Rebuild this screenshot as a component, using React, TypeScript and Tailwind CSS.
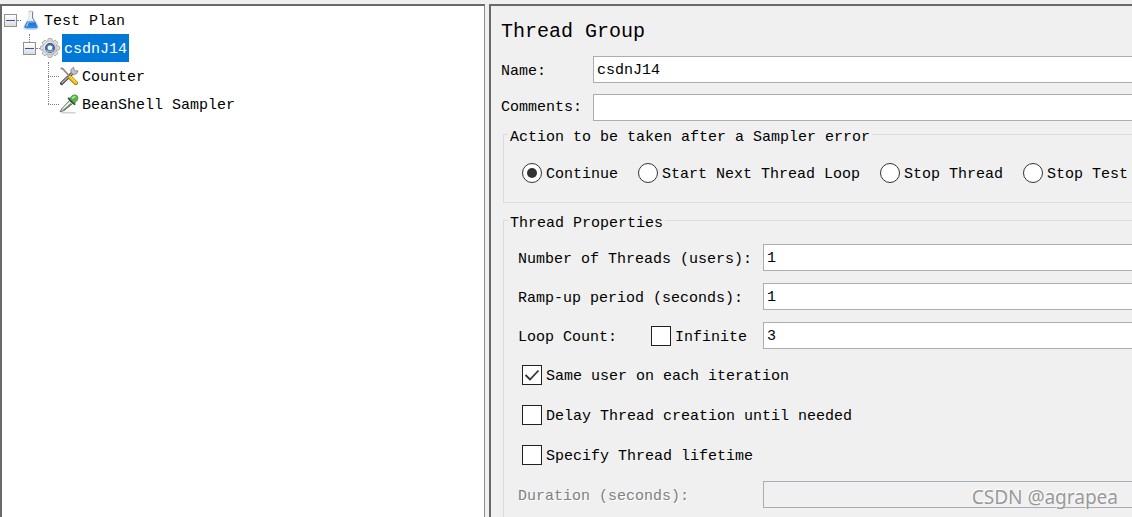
import { useId, useState, type ReactNode } from "react";

function FlaskIcon() {
  return (
    <svg width="16" height="20" viewBox="0 0 16 20" className="shrink-0" aria-hidden="true">
      <defs>
        <linearGradient id="liquid" x1="0" y1="0" x2="0" y2="1">
          <stop offset="0" stopColor="#1f6fce" />
          <stop offset="1" stopColor="#2f8ae6" />
        </linearGradient>
      </defs>
      <ellipse cx="8" cy="18.400" rx="7.600" ry="1.500" fill="#c3d6e6" />
      <path d="M6 1.500h4v6l5 8.800q.7 2.200-1.800 2.400H2.800Q.3 18.500 1 16.300L6 7.500z" fill="#eef3f8" stroke="#c6d0da" strokeWidth=".7" />
      <path d="M4 11.500h8.200l2.300 4.800q.5 1.900-1.600 2H3.100Q1 18.200 1.500 16.300z" fill="url(#liquid)" />
      <path d="M9.500 2v6l2.300 3.500" fill="none" stroke="#75879a" strokeWidth="1" />
      <path d="M5.500 12 3.500 16.500" fill="none" stroke="#a5d0f7" strokeWidth="1.200" />
      <ellipse cx="8.100" cy="11.700" rx="4" ry="1" fill="#73aee8" />
      <path d="M5.500 1.200h5" stroke="#bfc8d0" strokeWidth="1" />
    </svg>
  );
}

const TEETH = [0, 45, 90, 135, 180, 225, 270, 315];

function GearIcon() {
  return (
    <svg width="20" height="20" viewBox="0 0 20 20" className="shrink-0" aria-hidden="true">
      <defs>
        <linearGradient id="gearBody" x1="0" y1="0" x2="1" y2="1">
          <stop offset="0" stopColor="#f4f4f4" />
          <stop offset="1" stopColor="#bcbcbc" />
        </linearGradient>
      </defs>
      {TEETH.map((angle) => (
        <rect key={angle} x="7.800" y=".6" width="4.400" height="5" rx="1.200" fill="#e2e2e2" stroke="#959595" strokeWidth=".8" transform={`rotate(${angle} 10 10)`} />
      ))}
      <circle cx="10" cy="10" r="7" fill="url(#gearBody)" stroke="#b0b0b0" strokeWidth=".5" />
      <circle cx="10" cy="10" r="4.300" fill="#5c7db4" stroke="#34517f" strokeWidth="1.200" />
      <path d="M6.500 12a4 4 0 0 0 7-.2" fill="none" stroke="#8fb0de" strokeWidth="1.300" />
      <circle cx="10" cy="9.800" r="2.400" fill="#f3f7fc" />
    </svg>
  );
}

function ToolsIcon() {
  return (
    <svg width="20" height="20" viewBox="0 0 20 20" className="shrink-0" aria-hidden="true">
      <path d="M2.500 17.500 13.500 7" stroke="#4c4c4c" strokeWidth="3.200" strokeLinecap="round" />
      <path d="M3 16.800 14 6.500" stroke="#b4b4b4" strokeWidth="1.200" strokeLinecap="round" />
      <path d="M12.200 6.800 11.800 3.700 14.500 1.200 15 3.600 16.700 5 19 4.800 17.500 7.800 14.200 8.600z" fill="#c4c4c4" stroke="#777" strokeWidth=".8" />
      <path d="M1.500 2.300 3.500 2.500 10.500 10.200" fill="none" stroke="#7d7d7d" strokeWidth="1.700" />
      <path d="M2 2.500 10.500 11" stroke="#ddd" strokeWidth=".6" />
      <path d="M11 11.300 16.800 17" stroke="#9c7508" strokeWidth="4.300" strokeLinecap="round" />
      <path d="M11 11 16.800 16.700" stroke="#f2c21b" strokeWidth="3" strokeLinecap="round" />
      <path d="M11.500 10.800 16.500 15.700" stroke="#ffe680" strokeWidth=".8" strokeLinecap="round" />
    </svg>
  );
}

function DropperIcon() {
  return (
    <svg width="20" height="20" viewBox="0 0 20 20" className="shrink-0" aria-hidden="true">
      <path d="M3 18.800h13" stroke="#d2d2d2" strokeWidth="1.600" strokeLinecap="round" />
      <path d="M1 17.800 3 14.500 10.500 6.500 13.800 9.400 5.200 16.600z" fill="#c5cbc5" stroke="#6f756f" strokeWidth="1" />
      <path d="M4.500 14.700 11 8.200" stroke="#fff" strokeWidth="1.300" />
      <path d="M4.800 16 12 9.700" stroke="#5d8a50" strokeWidth="1.200" />
      <path d="M9.800 4.500 15.500 10" stroke="#34562f" strokeWidth="2.200" strokeLinecap="round" />
      <path d="M10.800 4.600 13.300 1.600q2.600-1.600 5 .3 1.500 2.300 0 4.300L15.600 9z" fill="#5eb24b" stroke="#4a9440" strokeWidth=".8" />
      <path d="M13.500 4 15.800 2.500" stroke="#b2e3a3" strokeWidth="1.500" strokeLinecap="round" />
    </svg>
  );
}

function Expander({ label }: { label: string }) {
  return (
    <button
      type="button"
      aria-label={label}
      className="flex h-[13px] w-[13px] shrink-0 items-center justify-center border border-[#919191] bg-linear-to-b from-white to-[#dcdcdc]"
    >
      <span className="h-px w-[9px] bg-[#3556a8]" />
    </button>
  );
}

function Tree() {
  return (
    <ul className="pl-1">
      <li>
        <div className="flex h-7 items-center">
          <Expander label="Collapse Test Plan" />
          <span className="mr-0.5 w-1 border-t border-dotted border-[#808080]" />
          <FlaskIcon />
          <span className="pl-[5px] pt-1">Test Plan</span>
        </div>
        <ul className="relative pl-[19px]">
          <li>
            <span className="absolute left-[25px] top-0 h-2 border-l border-dotted border-[#808080]" />
            <div className="flex h-7 items-center">
              <Expander label="Collapse csdnJ14" />
              <span className="w-1 border-t border-dotted border-[#808080]" />
              <GearIcon />
              <span className="ml-0.5 flex h-7 items-center bg-[#0078d7] px-0.5 pt-1 text-white">csdnJ14</span>
            </div>
            <ul className="relative pl-[25px]">
              <li className="flex h-7 items-center">
                <span className="absolute left-[25px] top-0 h-[42px] border-l border-dotted border-[#808080]" />
                <span className="w-[11px] border-t border-dotted border-[#808080]" />
                <ToolsIcon />
                <span className="pl-[3px] pt-1">Counter</span>
              </li>
              <li className="flex h-7 items-center">
                <span className="w-[11px] border-t border-dotted border-[#808080]" />
                <DropperIcon />
                <span className="pl-[3px] pt-1">BeanShell Sampler</span>
              </li>
            </ul>
          </li>
        </ul>
      </li>
    </ul>
  );
}

function Radio({ label, checked, onSelect }: { label: string; checked: boolean; onSelect: () => void }) {
  return (
    <label className="flex h-[22px] shrink-0 items-center gap-1 whitespace-nowrap">
      <input
        type="radio"
        name="onError"
        checked={checked}
        onChange={onSelect}
        className="grid h-5 w-5 appearance-none place-content-center rounded-full border border-[#333] bg-white before:h-[10px] before:w-[10px] before:rounded-full checked:before:bg-[#333]"
      />
      <span className="pt-1">{label}</span>
    </label>
  );
}

function Check({ label, initial = false }: { label: string; initial?: boolean }) {
  return (
    <label className="flex h-5 items-center gap-1 whitespace-nowrap">
      <span className="grid h-5 w-5">
        <input
          type="checkbox"
          defaultChecked={initial}
          className="peer col-start-1 row-start-1 h-5 w-5 appearance-none border border-[#222] bg-white"
        />
        <svg viewBox="0 0 20 20" aria-hidden="true" className="pointer-events-none invisible col-start-1 row-start-1 h-5 w-5 peer-checked:visible">
          <path d="M3.500 10 8 14.500 16.500 5.500" fill="none" stroke="#333" strokeWidth="1.800" />
        </svg>
      </span>
      <span className="pt-1">{label}</span>
    </label>
  );
}

const field = "h-[27px] min-w-0 flex-1 border border-r-0 border-[#abadb3] bg-white px-[3px] pt-0.5 outline-none";

function Property({ label, value, disabled = false, children }: { label: string; value: string; disabled?: boolean; children?: ReactNode }) {
  const id = useId();
  return (
    <div className="flex items-center">
      <div className="flex w-[245px] shrink-0 items-center justify-between pr-4">
        <label htmlFor={id} className={disabled ? "whitespace-nowrap pt-1 text-[#808080] [text-shadow:1px_1px_0_white]" : "whitespace-nowrap pt-1"}>
          {label}
        </label>
        {children}
      </div>
      <input id={id} type="text" defaultValue={value} disabled={disabled} className={disabled ? `${field} bg-[#f0f0f0]!` : field} />
    </div>
  );
}

function Group({ title, className, children }: { title: string; className: string; children: ReactNode }) {
  return (
    <fieldset className={`ml-3 min-w-0 border border-r-0 border-[#dcdcdc] ${className}`}>
      <legend className="ml-1 px-0.5 pt-2 leading-[18px]">{title}</legend>
      {children}
    </fieldset>
  );
}

const ACTIONS = ["Continue", "Start Next Thread Loop", "Stop Thread", "Stop Test"];

export default function App() {
  const [action, setAction] = useState("Continue");
  return (
    <div className="relative flex h-screen gap-1 overflow-hidden bg-[#f0f0f0] pt-1 font-['Liberation_Mono',monospace] text-[15px] leading-[18px] text-black">
      <nav aria-label="Test plan" className="w-[43%] max-w-[485px] shrink-0 border-l-2 border-t-2 border-r border-[#696969] border-r-[#8c8c90] bg-white">
        <div className="-ml-0.5">
          <Tree />
        </div>
      </nav>
      <main className="min-w-0 flex-1 overflow-hidden border-l-2 border-t-2 border-[#696969]">
        <h1 className="ml-2.5 flex h-[50px] items-center pt-0.5 text-[20px]">Thread Group</h1>
        <div className="ml-2.5 flex items-center">
          <label htmlFor="name" className="w-[92px] shrink-0 pt-1">Name:</label>
          <input id="name" type="text" defaultValue="csdnJ14" className={field} />
        </div>
        <div className="ml-2.5 mt-[11px] flex items-center">
          <label htmlFor="comments" className="w-[92px] shrink-0">Comments:</label>
          <input id="comments" type="text" className={field} />
        </div>
        <Group title="Action to be taken after a Sampler error" className="pb-[18px]">
          <div className="flex gap-5 pl-[18px] pt-[15px]">
            {ACTIONS.map((name) => (
              <Radio key={name} label={name} checked={name === action} onSelect={() => setAction(name)} />
            ))}
          </div>
        </Group>
        <Group title="Thread Properties" className="mt-1 pb-8">
          <div className="flex flex-col gap-3 pl-3.5 pt-[11px]">
            <Property label="Number of Threads (users):" value="1" />
            <Property label="Ramp-up period (seconds):" value="1" />
            <Property label="Loop Count:" value="3">
              <Check label="Infinite" />
            </Property>
          </div>
          <div className="flex flex-col items-start gap-5 py-4 pl-[18px]">
            <Check label="Same user on each iteration" initial />
            <Check label="Delay Thread creation until needed" />
            <Check label="Specify Thread lifetime" />
          </div>
          <div className="pl-3.5">
            <Property label="Duration (seconds):" value="" disabled />
          </div>
        </Group>
      </main>
      <p className="pointer-events-none absolute bottom-2 right-3.5 font-['Noto_Sans',sans-serif] text-[19px] leading-6 text-[#999] [text-shadow:-1px_-1px_0_white]">
        CSDN @agrapea
      </p>
    </div>
  );
}
